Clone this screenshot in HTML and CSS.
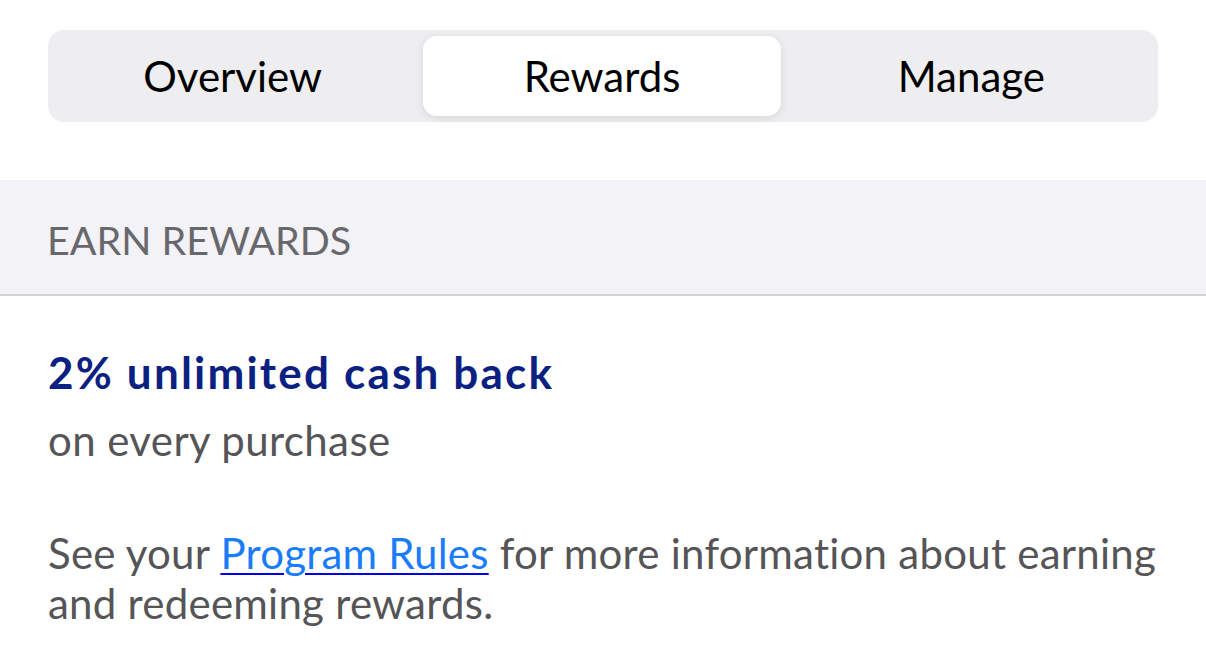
FILE: index.html
```html
<!DOCTYPE html>
<html>
<head>
<meta charset="utf-8">
<link rel="stylesheet" href="styles.css">
</head>
<body>
<div class="top">
  <div class="segmented">
    <div class="seg">Overview</div>
    <div class="seg active">Rewards</div>
    <div class="seg">Manage</div>
  </div>
</div>
<div class="section-header">EARN REWARDS</div>
<div class="content">
  <div class="title">2% unlimited cash back</div>
  <div class="subtitle">on every purchase</div>
  <p class="info">See your <a href="#" class="link">Program Rules</a> for more information about earning and redeeming rewards.</p>
</div>
</body>
</html>
```

FILE: styles.css
```css
html, body {
  margin: 0;
  padding: 0;
  background: #ffffff;
  font-family: Lato, "Liberation Sans", sans-serif;
}
.top {
  padding: 30px 48px 58px;
}
.segmented {
  display: grid;
  grid-template-columns: 1fr 1fr 1fr;
  gap: 12px;
  padding: 6px 8px 6px 6px;
  background: #eeeef0;
  border-radius: 16px;
  height: 80px;
}
.seg {
  display: flex;
  align-items: center;
  justify-content: center;
  font-size: 42px;
  color: #000;
  border-radius: 14px;
}
.seg.active {
  background: #fff;
  box-shadow: 0 2px 8px rgba(0,0,0,0.10);
}
.section-header {
  height: 116px;
  box-sizing: border-box;
  background: #f2f2f7;
  border-bottom: 2px solid #d4d4d8;
  display: flex;
  align-items: center;
  padding: 4px 47px 0;
  font-size: 39.5px;
  color: #68686c;
}
.content {
  padding: 48px 48px 0;
}
.title {
  font-size: 44px;
  font-weight: 700;
  color: #0b2182;
  line-height: 56px;
  letter-spacing: 2.2px;
}
.subtitle {
  font-size: 42px;
  color: #555558;
  line-height: 56px;
  margin-top: 12px;
  letter-spacing: 0.4px;
}
.info {
  margin: 60px 0 0;
  font-size: 42px;
  line-height: 50px;
  color: #555558;
  letter-spacing: 0.25px;
}
.link {
  color: #1a7cf8;
  text-decoration: underline;
  text-decoration-color: #0000ee;
  text-decoration-thickness: 2px;
  text-underline-offset: 4px;
}
```
